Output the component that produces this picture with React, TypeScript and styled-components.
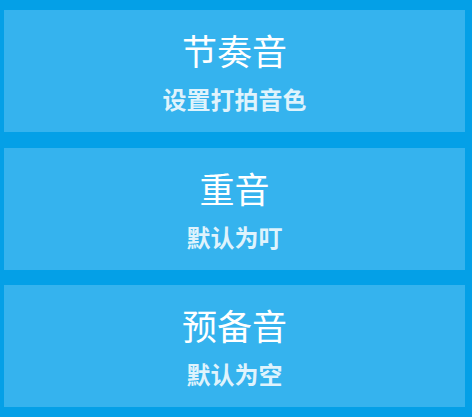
import styled, { createGlobalStyle } from "styled-components";

const GlobalStyle = createGlobalStyle`
  html, body {
    margin: 0;
    padding: 0;
    background: #04a0e7;
  }
  body {
    font-family: "Noto Sans CJK SC", "Noto Sans", sans-serif;
  }
`;

const Page = styled.div`
  width: 472px;
  height: 417px;
  box-sizing: border-box;
  background: #04a0e7;
  padding: 10px 7px 10px 4px;
  display: flex;
  flex-direction: column;
  gap: 15.5px;
`;

const Card = styled.div`
  height: 122px;
  flex-shrink: 0;
  background: #35b3ee;
  display: flex;
  flex-direction: column;
  align-items: center;
  padding-top: 16px;
  box-sizing: border-box;
`;

const Title = styled.div`
  font-size: 35px;
  line-height: 48px;
  color: #ffffff;
  font-weight: 400;
`;

const Subtitle = styled.div`
  margin-top: 8px;
  font-size: 24px;
  line-height: 34px;
  color: rgba(255, 255, 255, 0.85);
  font-weight: 700;
`;

const items = [
  { title: "节奏音", sub: "设置打拍音色" },
  { title: "重音", sub: "默认为叮" },
  { title: "预备音", sub: "默认为空" },
];

export default function App() {
  return (
    <>
      <GlobalStyle />
      <Page>
        {items.map((it) => (
          <Card key={it.title}>
            <Title>{it.title}</Title>
            <Subtitle>{it.sub}</Subtitle>
          </Card>
        ))}
      </Page>
    </>
  );
}
